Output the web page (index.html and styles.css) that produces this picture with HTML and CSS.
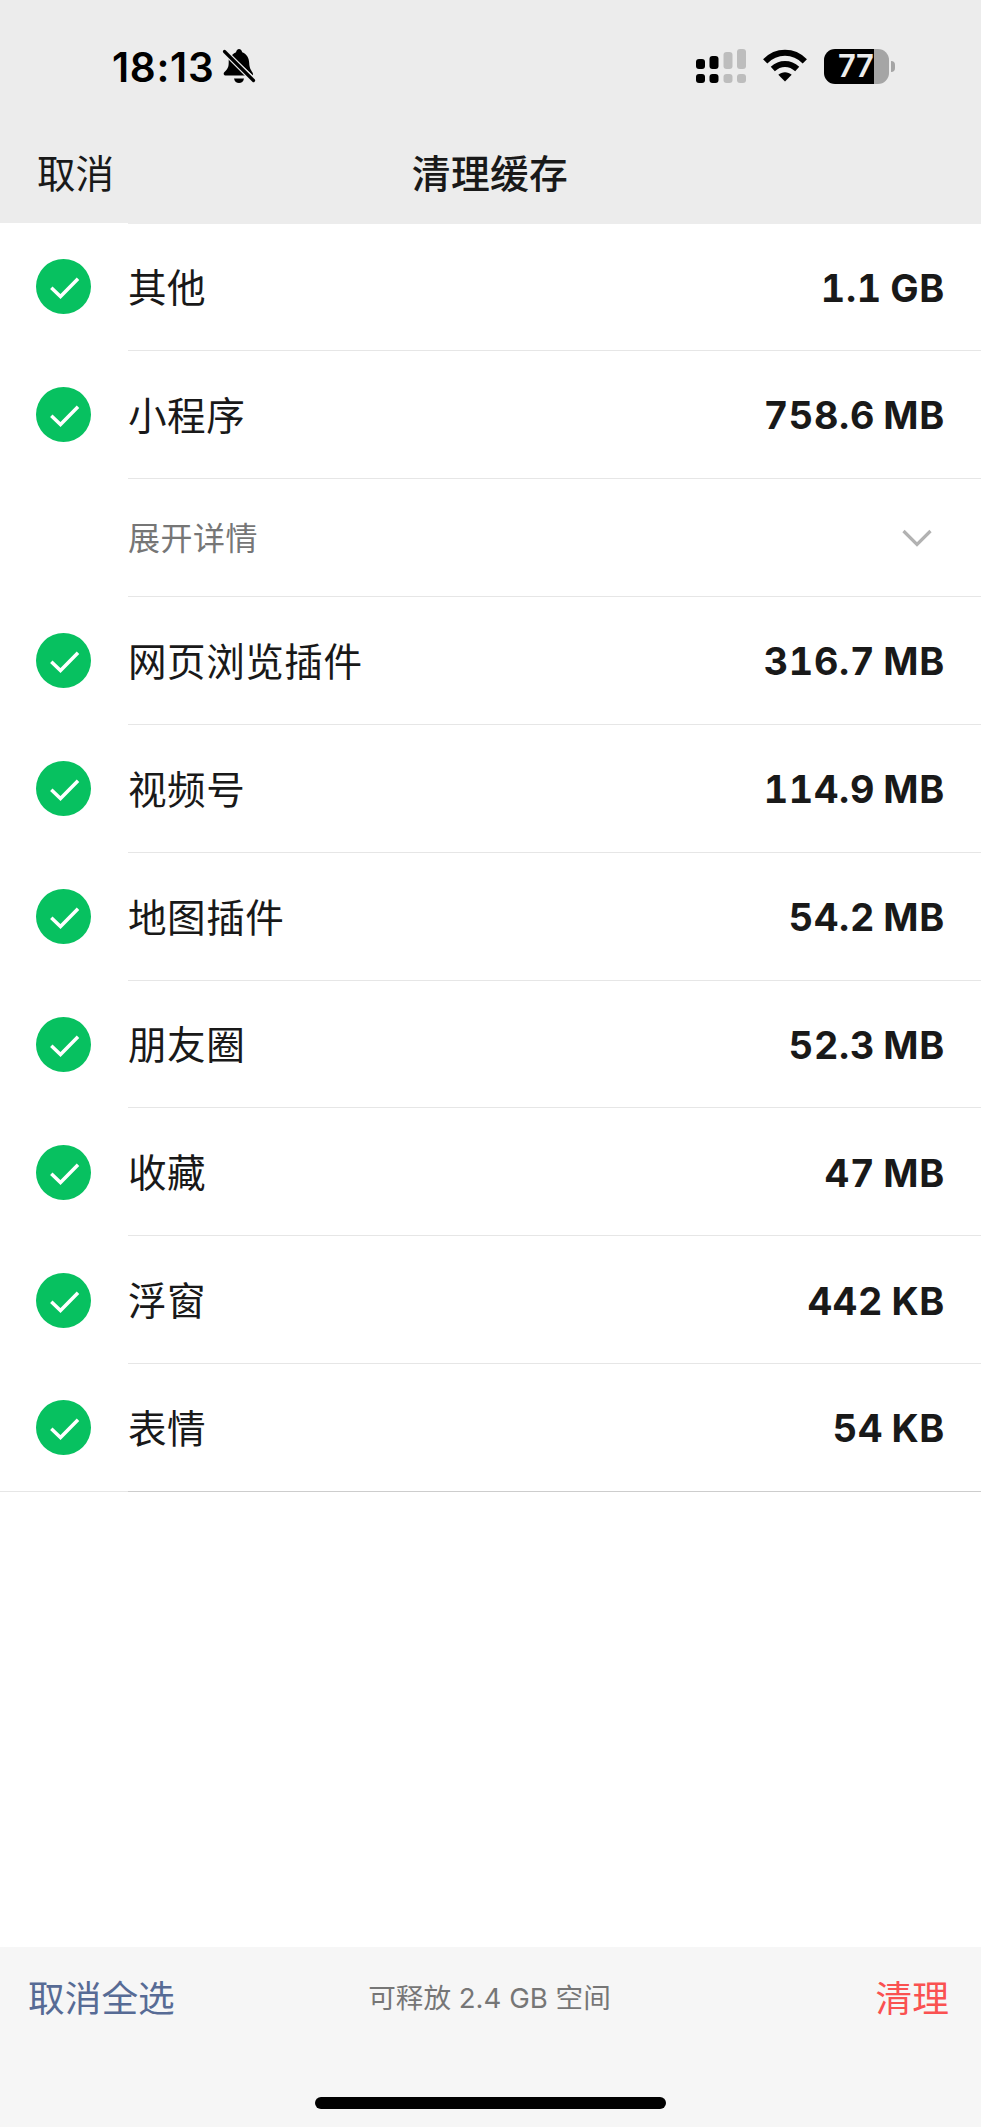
FILE: index.html
```
<!DOCTYPE html>
<html lang="zh-CN">
  <head>
    <meta charset="UTF-8" />
    <title>清理缓存</title>
    <link rel="stylesheet" href="styles.css">
  </head>
  <body>
    <svg class="defs" width="0" height="0">
      <symbol id="check" viewBox="0 0 55 55">
        <circle cx="27.5" cy="27.5" r="27.5" fill="#07c160" />
        <path d="M15.300 28.800L24.500 37.500L42 19.800" fill="none" stroke="#fff" stroke-width="3.5" />
      </symbol>
    </svg>

    <header>
      <div class="status">
        <div class="clock">
          <span class="time">18:13</span>
          <svg class="bell" width="34" height="36" viewBox="0 0 34 36">
            <path d="M9.500 7.500C11.500 5.500 13 4.600 14 4.200C14.600 2.200 15.800 1 17 1C18.400 1 19.600 2.200 20.200 4.200C25 6 27 10 27.200 15C27.400 20 28.500 21 30.800 25L31 27.500Z" />
            <path d="M6.700 11L23.500 27.500H4C1.500 27.500 1 25.500 2.500 24C5.500 21 6.600 19.500 6.700 15Z" />
            <path d="M12 30.500H22C21.500 33.500 19.500 35 17 35C14.500 35 12.500 33.500 12 30.500Z" />
            <path d="M2.500 3.500L31.500 32.500" stroke="#ececec" stroke-width="5.6" />
            <path d="M2.500 3.500L31.500 32.500" stroke="#000" stroke-width="3.2" stroke-linecap="round" />
          </svg>
        </div>
        <div class="signals">
          <svg width="50" height="36" viewBox="0 0 50 36">
            <rect x="0" y="11" width="9" height="10" rx="3" />
            <rect x="13.500" y="8" width="9" height="13" rx="3" />
            <rect x="0" y="26" width="9" height="9" rx="3" />
            <rect x="13.500" y="26" width="9" height="9" rx="3" />
            <g fill="#bdbdbd">
              <rect x="27.500" y="4" width="9" height="17" rx="3" />
              <rect x="41" y="1" width="9" height="20" rx="3" />
              <rect x="27.500" y="26" width="9" height="9" rx="3" />
              <rect x="41" y="26" width="9" height="9" rx="3" />
            </g>
          </svg>
          <svg class="wifi" width="44" height="36" viewBox="0 0 44 36">
            <g fill="none" stroke="#000" stroke-width="6">
              <path d="M2.200 13.400C13.500 2 30.500 2 41.800 13.400" />
              <path d="M9.800 21C17 14.300 27 14.300 34.200 21" />
            </g>
            <path d="M15.300 26.700C19 23.300 25 23.300 28.700 26.700L22 33.500Z" />
          </svg>
          <div class="battery"><span>77</span></div>
          <div class="nub"></div>
        </div>
      </div>
      <nav>
        <a class="cancel">取消</a>
        <h1>清理缓存</h1>
      </nav>
    </header>

    <main>
      <div class="row first">
        <svg class="check"><use href="#check" /></svg>
        <div class="cell"><span>其他</span><b>1.1 GB</b></div>
      </div>
      <div class="row">
        <svg class="check"><use href="#check" /></svg>
        <div class="cell"><span>小程序</span><b>758.6 MB</b></div>
      </div>
      <div class="row detail">
        <div class="cell">
          <span>展开详情</span>
          <svg class="arrow" width="30" height="18" viewBox="0 0 30 18">
            <path d="M1.500 2L15 15.500L28.500 2" fill="none" stroke="#b2b2b2" stroke-width="3.2" />
          </svg>
        </div>
      </div>
      <div class="row">
        <svg class="check"><use href="#check" /></svg>
        <div class="cell"><span>网页浏览插件</span><b>316.7 MB</b></div>
      </div>
      <div class="row">
        <svg class="check"><use href="#check" /></svg>
        <div class="cell"><span>视频号</span><b>114.9 MB</b></div>
      </div>
      <div class="row">
        <svg class="check"><use href="#check" /></svg>
        <div class="cell"><span>地图插件</span><b>54.2 MB</b></div>
      </div>
      <div class="row">
        <svg class="check"><use href="#check" /></svg>
        <div class="cell"><span>朋友圈</span><b>52.3 MB</b></div>
      </div>
      <div class="row">
        <svg class="check"><use href="#check" /></svg>
        <div class="cell"><span>收藏</span><b>47 MB</b></div>
      </div>
      <div class="row">
        <svg class="check"><use href="#check" /></svg>
        <div class="cell"><span>浮窗</span><b>442 KB</b></div>
      </div>
      <div class="row last">
        <svg class="check"><use href="#check" /></svg>
        <div class="cell"><span>表情</span><b>54 KB</b></div>
      </div>
    </main>

    <footer>
      <div class="toolbar">
        <a class="unselect">取消全选</a>
        <p>可释放 2.4 GB 空间</p>
        <a class="clean">清理</a>
      </div>
      <div class="home"></div>
    </footer>
  </body>
</html>
```
FILE: styles.css
```
* {
  box-sizing: border-box;
}

body {
  margin: 0;
  height: 2127px;
  display: flex;
  flex-direction: column;
  background: #fff;
  color: #191919;
  font-family: Inter, "Noto Sans CJK SC", sans-serif;
  font-size: 38.6px;
}

svg {
  display: block;
  flex: none;
}

.defs {
  position: absolute;
}

header {
  height: 223px;
  background: #ececec;
}

.status {
  height: 132px;
  padding: 0 86px 0 112px;
  display: flex;
  justify-content: space-between;
  align-items: center;
}

.clock,
.signals {
  display: flex;
  align-items: center;
  color: #000;
}

.time {
  font-size: 40.5px;
  font-weight: 600;
  line-height: 48px;
  letter-spacing: 0.7px;
  padding-top: 3px;
}

.bell {
  margin-left: 8px;
}

.wifi {
  margin: 0 17px;
}

.battery {
  width: 65px;
  height: 35px;
  padding-left: 14px;
  border-radius: 11px;
  background: linear-gradient(to right, #000 50px, #a5a5a5 50px);
  color: #ececec;
  font-size: 31px;
  font-weight: 600;
  line-height: 34px;
  letter-spacing: -0.5px;
}

.nub {
  width: 4px;
  height: 11px;
  margin-left: 2px;
  border-radius: 0 4px 4px 0;
  background: #a5a5a5;
}

nav {
  height: 84px;
  padding: 0 38px 7px 37px;
  display: grid;
  grid-template-columns: 1fr auto 1fr;
  align-items: center;
}

h1 {
  margin: 0;
  font-size: 38.8px;
  font-weight: 500;
  letter-spacing: 0.3px;
}

.row {
  height: 127.85px;
  padding-left: 36px;
  display: flex;
  align-items: center;
}

.check {
  width: 55px;
  height: 55px;
  margin-right: 37px;
}

.cell {
  flex: 1;
  height: 100%;
  padding-right: 36px;
  display: flex;
  justify-content: space-between;
  align-items: center;
  border-bottom: 1px solid #e6e6e6;
}

.cell span {
  padding-bottom: 3px;
  letter-spacing: 0.5px;
}

.cell b {
  padding-top: 2px;
  font-size: 37.8px;
  font-weight: 650;
  font-variant-numeric: tabular-nums;
  letter-spacing: 0.7px;
  word-spacing: -2.5px;
}

.first .cell {
  border-top: 1px solid #ececec;
}

.last {
  background: linear-gradient(#e6e6e6, #e6e6e6) left bottom / 128px 1px no-repeat;
}

.last .cell {
  border-bottom-color: #cdcdcd;
}

.detail {
  height: 118.3px;
  padding-left: 128px;
  color: #767676;
  font-size: 32px;
}

.arrow {
  margin: 2px 13px 0 0;
}

footer {
  height: 180px;
  margin-top: auto;
  background: #f6f6f6;
}

.toolbar {
  height: 150px;
  padding: 0 32px 52px 28px;
  display: grid;
  grid-template-columns: 1fr auto 1fr;
  align-items: center;
  font-size: 36.7px;
}

.toolbar p {
  margin: 0 -1px 0 1px;
  color: #767676;
  font-size: 27.6px;
}

.unselect {
  color: #576b95;
}

.clean {
  color: #fa5151;
  text-align: right;
}

.home {
  width: 351px;
  height: 12px;
  margin: 0 auto;
  border-radius: 6px;
  background: #000;
}
```
